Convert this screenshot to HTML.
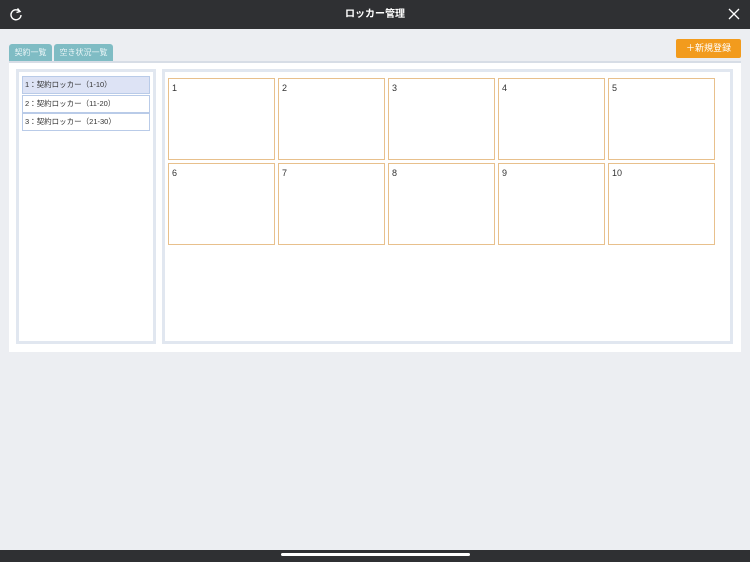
<!DOCTYPE html><html><head><meta charset="utf-8"><style>
*{margin:0;padding:0;box-sizing:border-box}
body{width:750px;height:562px;background:#eceef2;position:relative;overflow:hidden;font-family:"Liberation Sans","Noto Sans CJK JP",sans-serif}
.a{position:absolute}
.hdr{left:0;top:0;width:750px;height:29px;background:#2f3033;color:#fff;font-size:10px;text-align:center;line-height:29px;font-weight:bold}
.tab{top:44px;height:17px;background:#7fbcc4;color:#e8f4f6;font-size:8px;line-height:17px;text-align:center;border-radius:3px 3px 0 0}
.li{left:22px;width:128px;height:18px;border:1px solid #b9cbe8;background:#fff;font-size:7.5px;line-height:16px;padding-left:2px;color:#333}
.lk{width:107px;height:82px;border:1px solid #e8c08c;background:#fff;font-size:9px;padding:4px 3px;color:#333}
</style></head><body>
<div class="a hdr">ロッカー管理</div>
<svg class="a" style="left:9px;top:7px" width="14" height="14" viewBox="0 0 14 14"><path d="M10.5 4.2A5 5 0 1 0 12 8" fill="none" stroke="#fff" stroke-width="1.4"/><path d="M8.5 1.5L11 4.5 7.5 5.5" fill="none" stroke="#fff" stroke-width="1.4"/></svg>
<svg class="a" style="left:728px;top:8px" width="12" height="12"><path d="M1 1L11 11M11 1L1 11" stroke="#fff" stroke-width="1.3"/></svg>
<div class="a tab" style="left:9px;width:43px">契約一覧</div>
<div class="a tab" style="left:54px;width:59px">空き状況一覧</div>
<div class="a" style="left:676px;top:39px;width:65px;height:19px;background:#f29b1d;border-radius:2px;color:#fff;font-size:9px;line-height:19px;text-align:center">＋新規登録</div>
<div class="a" style="left:9px;top:61px;width:732px;height:291px;background:#fff;border-top:2px solid #d7dde6"></div>
<div class="a" style="left:16px;top:69px;width:140px;height:275px;border:3px solid #e1e7f0;background:#fff"></div>
<div class="a" style="left:162px;top:69px;width:571px;height:275px;border:3px solid #e1e7f0;background:#fff"></div>
<div class="a li" style="top:76px;background:#dde3f5">1：契約ロッカー（1-10）</div>
<div class="a li" style="top:95px">2：契約ロッカー（11-20）</div>
<div class="a li" style="top:113px">3：契約ロッカー（21-30）</div>
<div class="a lk" style="left:168px;top:78px">1</div>
<div class="a lk" style="left:278px;top:78px">2</div>
<div class="a lk" style="left:388px;top:78px">3</div>
<div class="a lk" style="left:498px;top:78px">4</div>
<div class="a lk" style="left:608px;top:78px">5</div>
<div class="a lk" style="left:168px;top:163px">6</div>
<div class="a lk" style="left:278px;top:163px">7</div>
<div class="a lk" style="left:388px;top:163px">8</div>
<div class="a lk" style="left:498px;top:163px">9</div>
<div class="a lk" style="left:608px;top:163px">10</div>
<div class="a" style="left:0;top:550px;width:750px;height:12px;background:#2f3033"></div>
<div class="a" style="left:281px;top:553px;width:189px;height:3px;background:#fff;border-radius:2px"></div>
</body></html>
